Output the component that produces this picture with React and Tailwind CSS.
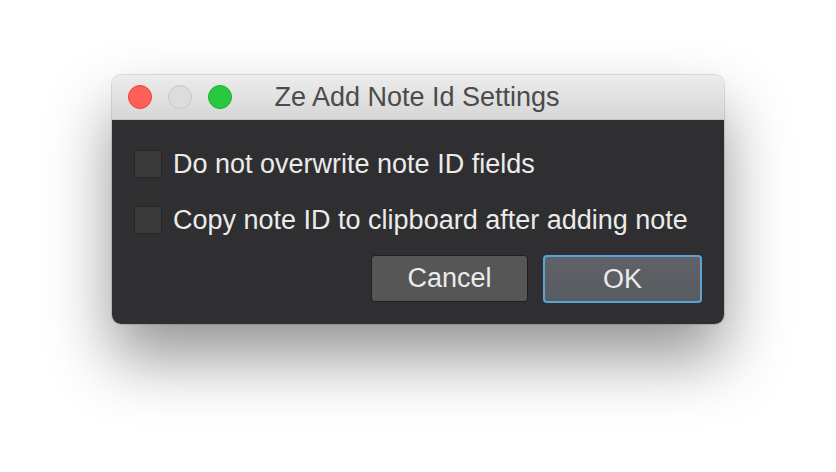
export default function App() {
  const font = { fontFamily: '"Liberation Sans", Arial, sans-serif' };
  return (
    <div className="w-[836px] h-[472px] bg-white flex justify-center pt-[75px]" style={font}>
      <div className="w-[612px] h-[249px] rounded-[9px] overflow-hidden flex flex-col shadow-[0_34px_64px_rgba(0,0,0,0.42),0_0_0_1px_rgba(0,0,0,0.12)]">
        <div className="h-[45px] bg-gradient-to-b from-[#ececec] to-[#d6d6d6] border-b border-[#c4c4c4] flex items-center relative shrink-0">
          <div className="flex items-center gap-[16px] pl-[16px]">
            <div className="w-[24px] h-[24px] rounded-full bg-[#fe5f57] border border-[#e2463f]" />
            <div className="w-[24px] h-[24px] rounded-full bg-[#dcdcdc] border border-[#c8c8c8]" />
            <div className="w-[24px] h-[24px] rounded-full bg-[#28c840] border border-[#1fae33]" />
          </div>
          <div className="absolute inset-0 flex items-center justify-center pr-[2px] text-[27px] text-[#4b4b4b] pointer-events-none">
            Ze Add Note Id Settings
          </div>
        </div>
        <div className="flex-1 bg-[#2f2f31] px-[22px] pt-[30px] flex flex-col">
          <label className="flex items-center h-[28px] gap-[11px]">
            <span className="w-[28px] h-[28px] bg-[#3a3a3b] border border-[#242425] rounded-[3px] shrink-0" />
            <span className="text-[27px] text-[#ebebeb] leading-none">Do not overwrite note ID fields</span>
          </label>
          <label className="flex items-center h-[28px] gap-[11px] mt-[28px]">
            <span className="w-[28px] h-[28px] bg-[#3a3a3b] border border-[#242425] rounded-[3px] shrink-0" />
            <span className="text-[27px] text-[#ebebeb] leading-none">Copy note ID to clipboard after adding note</span>
          </label>
          <div className="flex justify-end gap-[15px] mt-[21px]">
            <button className="w-[157px] h-[47px] rounded-[4px] bg-[#565656] border border-[#1f1f1f] text-[27px] text-[#ebebeb] flex items-center justify-center">
              Cancel
            </button>
            <button className="w-[159px] h-[48px] rounded-[4px] bg-gradient-to-b from-[#5f6368] to-[#585c61] border-2 border-[#5ba3d6] text-[27px] text-[#ebebeb] flex items-center justify-center">
              OK
            </button>
          </div>
        </div>
      </div>
    </div>
  );
}
